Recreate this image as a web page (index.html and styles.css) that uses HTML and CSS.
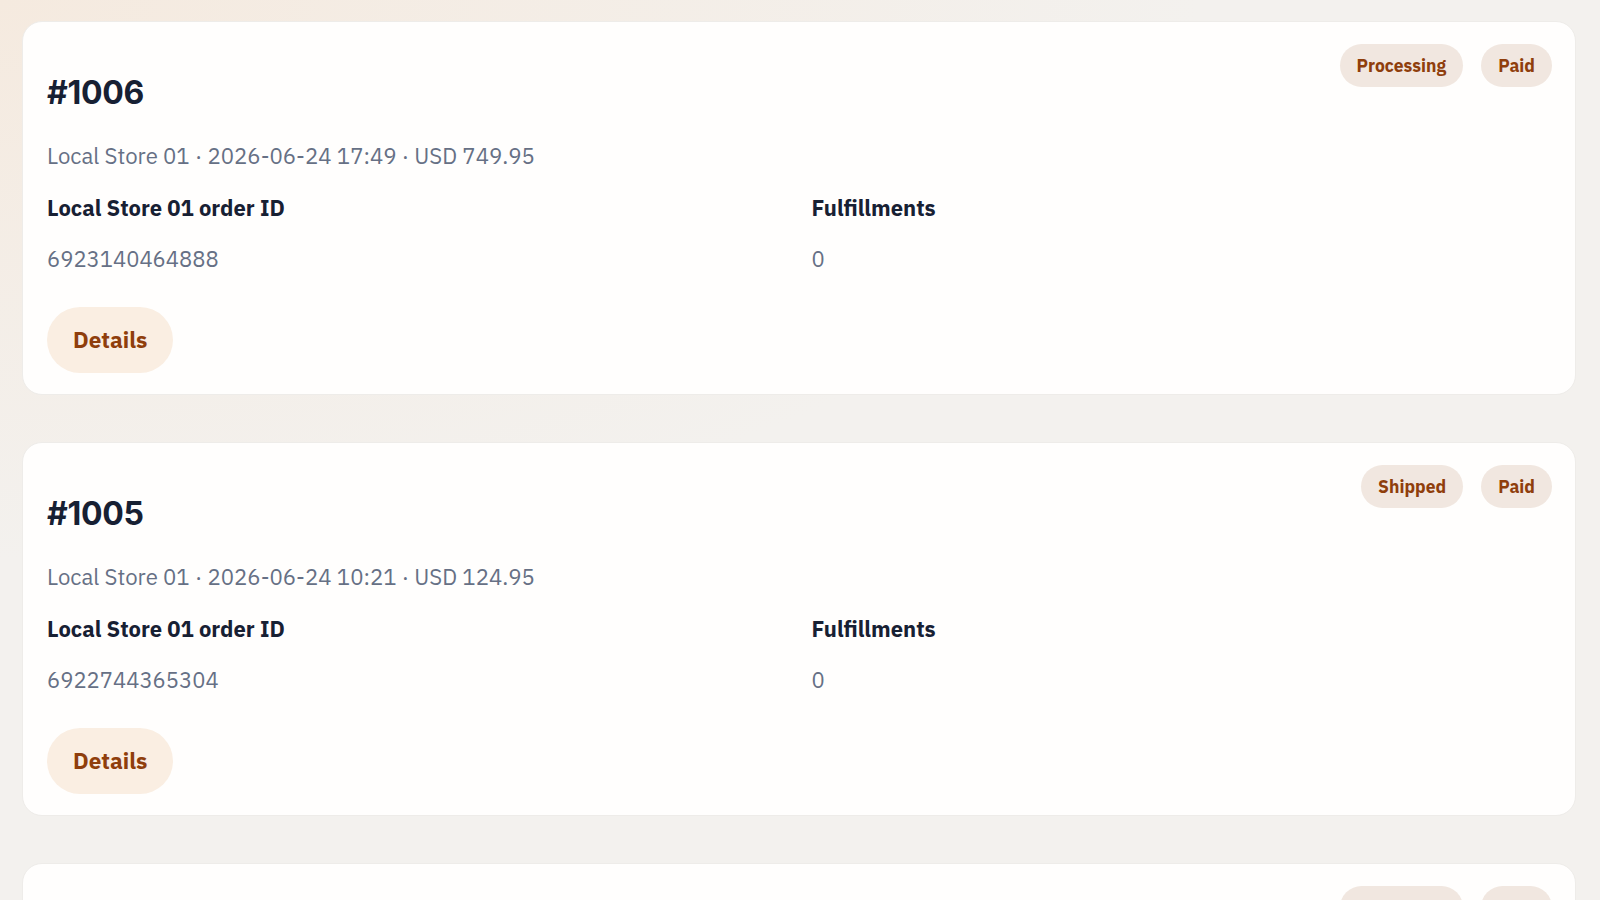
FILE: index.html
```html
<!DOCTYPE html>
<html lang="en">
<head>
    <meta charset="UTF-8">
    <meta name="viewport" content="width=device-width, initial-scale=1.0">
    <title>Orders</title>
    <link rel="stylesheet" href="styles.css">
</head>
<body>
    <div class="order-list">
        <div class="order-card">
            <div class="order-head">
                <h2>#1006</h2>
                <div class="badges">
                    <span class="badge">Processing</span>
                    <span class="badge">Paid</span>
                </div>
            </div>
            <p class="order-meta">Local Store 01 · 2026-06-24 17:49 · USD 749.95</p>
            <div class="order-fields">
                <div class="field">
                    <div class="field-label">Local Store 01 order ID</div>
                    <div class="field-value">6923140464888</div>
                </div>
                <div class="field">
                    <div class="field-label">Fulfillments</div>
                    <div class="field-value">0</div>
                </div>
            </div>
            <button class="details-btn">Details</button>
        </div>

        <div class="order-card">
            <div class="order-head">
                <h2>#1005</h2>
                <div class="badges">
                    <span class="badge">Shipped</span>
                    <span class="badge">Paid</span>
                </div>
            </div>
            <p class="order-meta">Local Store 01 · 2026-06-24 10:21 · USD 124.95</p>
            <div class="order-fields">
                <div class="field">
                    <div class="field-label">Local Store 01 order ID</div>
                    <div class="field-value">6922744365304</div>
                </div>
                <div class="field">
                    <div class="field-label">Fulfillments</div>
                    <div class="field-value">0</div>
                </div>
            </div>
            <button class="details-btn">Details</button>
        </div>

        <div class="order-card">
            <div class="order-head">
                <h2>#1004</h2>
                <div class="badges">
                    <span class="badge">Processing</span>
                    <span class="badge">Paid</span>
                </div>
            </div>
            <p class="order-meta">Local Store 01 · 2026-06-23 19:02 · USD 89.90</p>
            <div class="order-fields">
                <div class="field">
                    <div class="field-label">Local Store 01 order ID</div>
                    <div class="field-value">6921980112640</div>
                </div>
                <div class="field">
                    <div class="field-label">Fulfillments</div>
                    <div class="field-value">0</div>
                </div>
            </div>
            <button class="details-btn">Details</button>
        </div>
    </div>
</body>
</html>
```

FILE: styles.css
```css
html, body {
    height: 100%;
    overflow: hidden;
}
body {
    margin: 0;
    font-family: "IBM Plex Sans", "Noto Sans", sans-serif;
    color: #172033;
    background-color: #f3f1ee;
    background-image: radial-gradient(ellipse 1200px 560px at 0 0, #f5eadf 0%, rgba(245, 234, 223, 0) 100%);
}
.order-list {
    display: flex;
    flex-direction: column;
    gap: 47px;
    padding: 21px 24px 0 22px;
}
.order-card {
    background-color: #fffefd;
    border: 1px solid #eeece9;
    border-radius: 20px;
    padding: 22px 23px 21px 24px;
}
.order-head {
    display: flex;
    justify-content: space-between;
    align-items: flex-start;
}
.order-head h2 {
    margin: 30px 0 0;
    font-family: Inter, "Noto Sans", sans-serif;
    font-size: 32px;
    line-height: 37px;
    font-weight: 700;
    letter-spacing: -0.3px;
    color: #172033;
}
.badges {
    display: flex;
    gap: 18px;
}
.badge {
    background-color: #f1e7e0;
    color: #8f3e0c;
    font-weight: 700;
    font-size: 17.5px;
    line-height: 23px;
    padding: 10px 17px;
    border-radius: 999px;
}
.order-meta {
    margin: 30px 0 0;
    font-size: 22.2px;
    line-height: 30px;
    color: #667085;
}
.order-fields {
    display: grid;
    grid-template-columns: 1fr 1fr;
    gap: 24px;
    margin-top: 22px;
}
.field-label {
    font-size: 22px;
    line-height: 30px;
    font-weight: 700;
    color: #172033;
}
.field-value {
    margin-top: 21px;
    font-size: 22px;
    line-height: 30px;
    color: #667085;
}
.details-btn {
    margin-top: 33px;
    font-family: inherit;
    font-size: 22.5px;
    line-height: 26px;
    font-weight: 700;
    color: #8f3e0c;
    background-color: #faeee2;
    border: none;
    border-radius: 999px;
    padding: 20px 26px;
    cursor: pointer;
}
.details-btn:hover {
    background-color: #f6e2cf;
}
```
